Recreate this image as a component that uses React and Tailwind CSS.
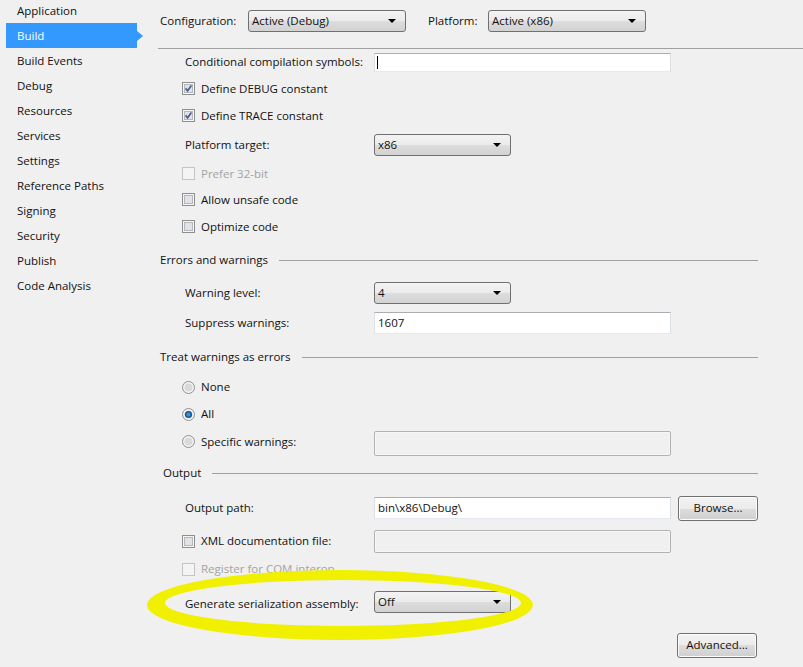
import React from 'react';

const navItems = [
  'Application',
  'Build',
  'Build Events',
  'Debug',
  'Resources',
  'Services',
  'Settings',
  'Reference Paths',
  'Signing',
  'Security',
  'Publish',
  'Code Analysis',
];

function Combo({ value, w }) {
  return (
    <div
      className={`${w} h-[22px] shrink-0 flex items-center justify-between rounded-[3px] border border-[#707070] bg-[linear-gradient(to_bottom,#f3f3f3_0%,#ebebeb_50%,#dddddd_50%,#d2d2d2_100%)] pl-[3px] pr-[9px]`}
    >
      <span className="leading-none">{value}</span>
      <svg width="8" height="4" viewBox="0 0 8 4">
        <path d="M0 0 H8 L4 4 Z" fill="#000" />
      </svg>
    </div>
  );
}

function TextBox({ value, disabled, h }) {
  if (disabled) {
    return (
      <div className={`w-[297px] ${h} shrink-0 rounded-[2px] border border-[#b2b2b2] bg-[#f0f0f0] shadow-[inset_0_0_0_1px_#f7f7f7]`} />
    );
  }
  return (
    <div
      className={`w-[297px] ${h} shrink-0 flex items-center border border-[#e3e9ef] border-t-[#abadb3] border-x-[#dbdfe6] bg-white pl-[3px]`}
    >
      {value}
    </div>
  );
}

function WinButton({ children }) {
  return (
    <div className="w-[80px] h-[25px] flex items-center justify-center rounded-[3px] border border-[#707070] bg-[linear-gradient(to_bottom,#f3f3f3_0%,#ebebeb_50%,#dddddd_50%,#cfcfcf_100%)] shadow-[inset_0_0_0_1px_#fcfcfc]">
      {children}
    </div>
  );
}

function CheckBox({ checked, disabled }) {
  if (disabled) {
    return (
      <svg width="13" height="13" viewBox="0 0 13 13" className="shrink-0">
        <rect x="0.5" y="0.5" width="12" height="12" fill="#f4f4f4" stroke="#c4c4c4" />
      </svg>
    );
  }
  return (
    <svg width="13" height="13" viewBox="0 0 13 13" className="shrink-0">
      <rect x="0.5" y="0.5" width="12" height="12" fill="#f6f6f6" stroke="#8e8f8f" />
      <rect x="2.5" y="2.5" width="8" height="8" fill="#e1e3e6" stroke="#b4b8bd" />
      {checked && (
        <path d="M3.6 6.4 L5.6 8.8 L9.4 3.4" fill="none" stroke="#4c5f91" strokeWidth="1.7" />
      )}
    </svg>
  );
}

function Radio({ checked }) {
  return (
    <svg width="13" height="13" viewBox="0 0 13 13" className="shrink-0">
      <circle cx="6.5" cy="6.5" r="6" fill="#f4f4f4" stroke="#8e8f8f" />
      <circle cx="6.5" cy="6.5" r="4" fill="#dadada" />
      {checked && (
        <>
          <circle cx="6.5" cy="6.5" r="3.6" fill="#1c5a93" />
          <circle cx="6.5" cy="6.5" r="2" fill="#3d8fd6" />
        </>
      )}
    </svg>
  );
}

function Header({ children, pl }) {
  return (
    <div className={`flex items-center ${pl}`}>
      <span className="whitespace-nowrap">{children}</span>
      <div className="flex-1 ml-[11px] border-t border-[#a0a0a0]" />
    </div>
  );
}

export default function App() {
  return (
    <div className="relative w-[803px] h-[667px] overflow-hidden bg-[#f0f0f0] text-[11.5px] text-[#111] flex items-start font-['Open_Sans','Noto_Sans',sans-serif]">
      {/* left nav */}
      <div className="w-[143px] shrink-0 -mt-[2px]">
        {navItems.map((item) =>
          item === 'Build' ? (
            <div key={item} className="h-[25px] flex items-center ml-[6px]">
              <div className="w-[131px] h-[25px] flex items-center pl-[11px] bg-[#3399ff] text-white">{item}</div>
              <div className="w-0 h-0 border-y-[5px] border-y-transparent border-l-[6px] border-l-[#3399ff]" />
            </div>
          ) : (
            <div key={item} className="h-[25px] flex items-center pl-[17px]">
              {item}
            </div>
          )
        )}
      </div>

      {/* main panel */}
      <div className="flex-1 pl-[15px]">
        <div className="h-[42px] flex items-center pl-[2px]">
          <span className="w-[88px]">Configuration:</span>
          <Combo value="Active (Debug)" w="w-[158px]" />
          <span className="w-[60px] ml-[22px]">Platform:</span>
          <Combo value="Active (x86)" w="w-[158px]" />
        </div>
        <div className="mt-[6px] border-t border-[#a0a0a0]" />

        <div className="w-[600px] flex flex-col">
          <div className="h-[26px] flex items-center pl-[27px]">
            <span className="w-[189px]">Conditional compilation symbols:</span>
            <div className="w-[297px] h-[19px] flex items-center border border-[#e3e9ef] border-t-[#abadb3] border-x-[#dbdfe6] bg-white pl-[2px]">
              <div className="w-px h-[13px] bg-black" />
            </div>
          </div>
          <div className="h-[27px] flex items-center pl-[24px] gap-[6px]">
            <CheckBox checked />
            <span>Define DEBUG constant</span>
          </div>
          <div className="h-[27px] flex items-center pl-[24px] gap-[6px]">
            <CheckBox checked />
            <span>Define TRACE constant</span>
          </div>
          <div className="h-[32px] flex items-center pl-[27px]">
            <span className="w-[189px]">Platform target:</span>
            <Combo value="x86" w="w-[137px]" />
          </div>
          <div className="h-[25px] flex items-center pl-[24px] gap-[6px] text-[#a3a3a3]">
            <CheckBox disabled />
            <span>Prefer 32-bit</span>
          </div>
          <div className="h-[27px] flex items-center pl-[24px] gap-[6px]">
            <CheckBox />
            <span>Allow unsafe code</span>
          </div>
          <div className="h-[27px] flex items-center pl-[24px] gap-[6px]">
            <CheckBox />
            <span>Optimize code</span>
          </div>

          <div className="h-[40px] flex flex-col justify-center">
            <Header pl="pl-[2px]">Errors and warnings</Header>
          </div>
          <div className="h-[25px] flex items-center pl-[27px]">
            <span className="w-[189px]">Warning level:</span>
            <Combo value="4" w="w-[137px]" />
          </div>
          <div className="h-[36px] flex items-center pl-[27px]">
            <span className="w-[189px]">Suppress warnings:</span>
            <TextBox value="1607" h="h-[22px]" />
          </div>

          <div className="h-[32px] flex flex-col justify-center">
            <Header pl="pl-[2px]">Treat warnings as errors</Header>
          </div>
          <div className="h-[28px] flex items-center pl-[24px] gap-[6px]">
            <Radio />
            <span>None</span>
          </div>
          <div className="h-[26px] flex items-center pl-[24px] gap-[6px]">
            <Radio checked />
            <span>All</span>
          </div>
          <div className="h-[32px] flex items-center pl-[24px]">
            <div className="w-[192px] flex items-center gap-[6px] -mt-[3px]">
              <Radio />
              <span>Specific warnings:</span>
            </div>
            <TextBox disabled h="h-[25px]" />
          </div>

          <div className="h-[28px] flex flex-col justify-center">
            <Header pl="pl-[5px]">Output</Header>
          </div>
          <div className="h-[42px] flex items-center pl-[27px]">
            <span className="w-[189px]">Output path:</span>
            <TextBox value={'bin\\x86\\Debug\\'} h="h-[22px]" />
            <div className="ml-[7px]">
              <WinButton>Browse...</WinButton>
            </div>
          </div>
          <div className="h-[24px] flex items-center pl-[24px]">
            <div className="w-[192px] flex items-center gap-[6px]">
              <CheckBox />
              <span>XML documentation file:</span>
            </div>
            <TextBox disabled h="h-[23px]" />
          </div>
          <div className="h-[32px] flex items-center pl-[24px] gap-[6px] text-[#a3a3a3]">
            <CheckBox disabled />
            <span>Register for COM interop</span>
          </div>
          <div className="h-[34px] flex items-center pl-[27px]">
            <span className="w-[189px] pt-[4px]">Generate serialization assembly:</span>
            <Combo value="Off" w="w-[137px]" />
          </div>
          <div className="h-[52px] flex items-center justify-end pr-[1px]">
            <WinButton>Advanced...</WinButton>
          </div>
        </div>
      </div>

      {/* highlighter annotation */}
      <svg
        className="absolute inset-0 pointer-events-none"
        width="803"
        height="667"
        viewBox="0 0 803 667"
      >
        <path
          fillRule="evenodd"
          fill="#f0f000"
          d="M147 605 a193 35 0 1 0 386 0 a193 35 0 1 0 -386 0 Z M165 603 a178 23 0 1 0 356 0 a178 23 0 1 0 -356 0 Z"
        />
      </svg>
    </div>
  );
}
